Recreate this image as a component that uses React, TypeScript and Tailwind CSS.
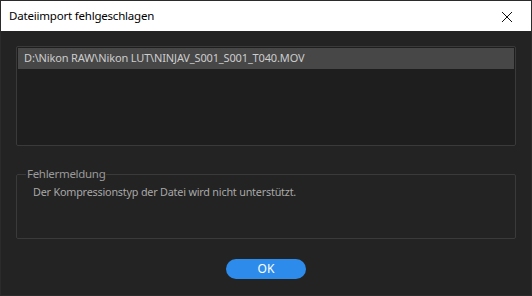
import React from 'react';

// Fehlerdialog beim Dateiimport
const files = ['D:\\Nikon RAW\\Nikon LUT\\NINJAV_S001_S001_T040.MOV'];

export default function App() {
  return (
    <div
      className="w-[532px] h-[296px] flex flex-col bg-[#232323] border border-[#2b2b2b] overflow-hidden"
      style={{ fontFamily: '"Noto Sans", "Open Sans", sans-serif' }}
    >
      {/* Titelleiste */}
      <div className="h-[30px] shrink-0 bg-white flex items-center justify-between pl-[8px] pr-[18px]">
        <span className="text-[11.5px] text-black tracking-[-0.2px]">Dateiimport fehlgeschlagen</span>
        <svg width="12" height="12" viewBox="0 0 12 12" className="mt-[1px]">
          <path d="M1 1L11 11M11 1L1 11" stroke="#111" strokeWidth="1" fill="none" />
        </svg>
      </div>

      <div className="flex-1 flex flex-col px-[15px] pt-[15px]">
        {/* Dateiliste */}
        <div className="h-[100px] bg-[#1e1e1e] border border-[#3a3a3a] rounded-[2px] p-[1px]">
          {files.map((f) => (
            <div
              key={f}
              className="h-[21px] bg-[#474747] flex items-center pl-[6px] text-[11px] tracking-[-0.15px] text-[#cdcdcd]"
            >
              {f}
            </div>
          ))}
        </div>

        {/* Fehlermeldung */}
        <fieldset className="mt-[21px] h-[72px] border border-[#3a3a3a] rounded-[2px] px-[9px]">
          <legend className="px-[1px] text-[11.5px] tracking-[-0.3px] text-[#9a9a9a] leading-[14px]">Fehlermeldung</legend>
          <p className="pl-[7px] mt-[3px] text-[10.8px] tracking-[-0.2px] text-[#a8a8a8]">
            Der Kompressionstyp der Datei wird nicht unterstützt.
          </p>
        </fieldset>

        <div className="flex justify-center mt-[20px]">
          <button className="w-[80px] h-[20px] rounded-full bg-[#2d8ceb] text-white text-[12px] leading-none">
            OK
          </button>
        </div>
      </div>
    </div>
  );
}
